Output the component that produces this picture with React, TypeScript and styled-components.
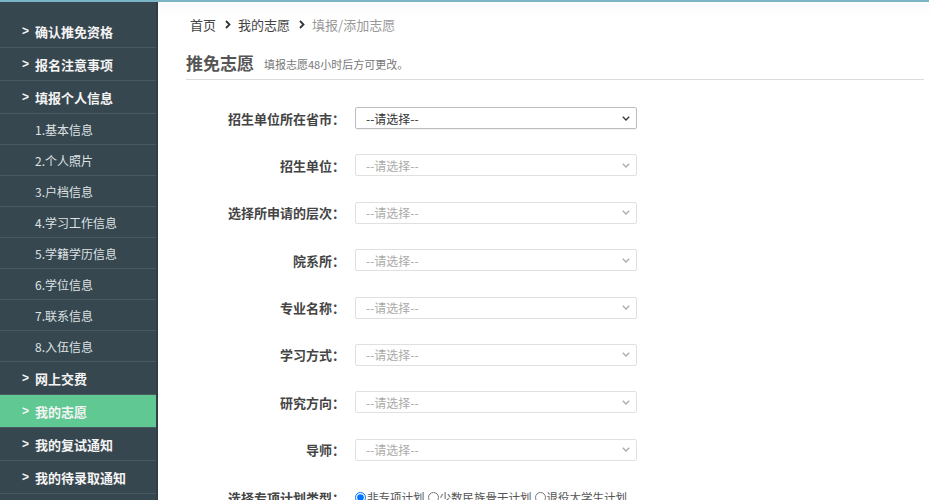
import React from "react";
import styled, { createGlobalStyle } from "styled-components";

const GlobalStyle = createGlobalStyle`
  html, body {
    margin: 0;
    padding: 0;
    background: #fff;
    overflow: hidden;
  }
  body {
    font-family: "Noto Sans CJK SC", "Noto Sans", sans-serif;
  }
  * {
    box-sizing: border-box;
  }
`;

type NavEntry = { label: string; level: "main" | "sub"; active?: boolean };

const navItems: NavEntry[] = [
  { label: "确认推免资格", level: "main" },
  { label: "报名注意事项", level: "main" },
  { label: "填报个人信息", level: "main" },
  { label: "1.基本信息", level: "sub" },
  { label: "2.个人照片", level: "sub" },
  { label: "3.户档信息", level: "sub" },
  { label: "4.学习工作信息", level: "sub" },
  { label: "5.学籍学历信息", level: "sub" },
  { label: "6.学位信息", level: "sub" },
  { label: "7.联系信息", level: "sub" },
  { label: "8.入伍信息", level: "sub" },
  { label: "网上交费", level: "main" },
  { label: "我的志愿", level: "main", active: true },
  { label: "我的复试通知", level: "main" },
  { label: "我的待录取通知", level: "main" },
];

const formRows = [
  { label: "招生单位所在省市：", enabled: true },
  { label: "招生单位：", enabled: false },
  { label: "选择所申请的层次：", enabled: false },
  { label: "院系所：", enabled: false },
  { label: "专业名称：", enabled: false },
  { label: "学习方式：", enabled: false },
  { label: "研究方向：", enabled: false },
  { label: "导师：", enabled: false },
];

const plans = ["非专项计划", "少数民族骨干计划", "退役大学生计划"];

const Chevron = ({ color }: { color: string }) => (
  <svg width="8" height="5" viewBox="0 0 8 5" fill="none">
    <path d="M0.8 0.8 L4 4 L7.2 0.8" stroke={color} strokeWidth="1.3" />
  </svg>
);

const CrumbArrow = () => (
  <svg width="6" height="9" viewBox="0 0 6 9" fill="none">
    <path d="M1 1 L4.5 4.5 L1 8" stroke="#333" strokeWidth="1.8" />
  </svg>
);

export default function App() {
  return (
    <>
      <GlobalStyle />
      <Page>
        <Sidebar>
          {navItems.map((item) => (
            <NavItem key={item.label} $level={item.level} $active={!!item.active}>
              {item.level === "main" && <NavMark>&gt;</NavMark>}
              {item.label}
            </NavItem>
          ))}
        </Sidebar>
        <Content>
          <Breadcrumb>
            <Crumb>首页</Crumb>
            <CrumbArrow />
            <Crumb>我的志愿</Crumb>
            <CrumbArrow />
            <Crumb $current>填报/添加志愿</Crumb>
          </Breadcrumb>
          <TitleRow>
            <Title>推免志愿</Title>
            <SubTitle>填报志愿48小时后方可更改。</SubTitle>
          </TitleRow>
          <Form>
            {formRows.map((row) => (
              <FormRow key={row.label}>
                <FieldLabel>{row.label}</FieldLabel>
                <SelectBox $enabled={row.enabled}>
                  <SelectText $enabled={row.enabled}>--请选择--</SelectText>
                  <Chevron color={row.enabled ? "#333" : "#aaa"} />
                </SelectBox>
              </FormRow>
            ))}
            <FormRow>
              <FieldLabel>选择专项计划类型：</FieldLabel>
              <RadioGroup>
                {plans.map((p, i) => (
                  <RadioLabel key={p}>
                    <Radio type="radio" name="plan" defaultChecked={i === 0} />
                    {p}
                  </RadioLabel>
                ))}
              </RadioGroup>
            </FormRow>
          </Form>
        </Content>
      </Page>
    </>
  );
}

const Page = styled.div`
  display: flex;
  height: 500px;
  border-top: 2px solid #7ab6c6;
`;

const Sidebar = styled.nav`
  width: 158px;
  flex-shrink: 0;
  background: #37474f;
  border-right: 2px solid #303f46;
  padding-top: 13px;
  display: flex;
  flex-direction: column;
`;

const NavItem = styled.div<{ $level: "main" | "sub"; $active: boolean }>`
  display: flex;
  align-items: center;
  height: ${({ $level }) => ($level === "main" ? "33px" : "31px")};
  padding-left: ${({ $level }) => ($level === "main" ? "22px" : "35px")};
  border-bottom: 1px solid #4a5a62;
  background: ${({ $active }) => ($active ? "#60c893" : "transparent")};
  color: ${({ $level }) => ($level === "main" ? "#f4f4f4" : "#dde2e4")};
  font-size: ${({ $level }) => ($level === "main" ? "13px" : "12px")};
  font-weight: ${({ $level }) => ($level === "main" ? 700 : 400)};
  white-space: nowrap;
`;

const NavMark = styled.span`
  font-family: "Liberation Sans", sans-serif;
  font-weight: 700;
  font-size: 12px;
  width: 13px;
`;

const Content = styled.main`
  flex: 1;
  padding: 0 5px 0 28px;
  background: linear-gradient(#fcf8fc 0px, #ffffff 14px);
`;

const Breadcrumb = styled.div`
  display: flex;
  align-items: center;
  gap: 7px;
  height: 20px;
  margin-top: 12px;
  padding-left: 4px;
`;

const Crumb = styled.span<{ $current?: boolean }>`
  font-size: 13px;
  color: ${({ $current }) => ($current ? "#999" : "#444")};
  margin-right: ${({ $current }) => ($current ? "0" : "2px")};
`;

const TitleRow = styled.div`
  display: flex;
  align-items: center;
  gap: 10px;
  height: 29px;
  margin-top: 17px;
  padding-bottom: 5px;
  border-bottom: 1px solid #dcdcdc;
`;

const Title = styled.h2`
  margin: 0;
  font-size: 17px;
  font-weight: 700;
  color: #555;
`;

const SubTitle = styled.span`
  font-size: 11px;
  color: #777;
  padding-top: 2px;
`;

const Form = styled.div`
  display: flex;
  flex-direction: column;
  gap: 25.4px;
  padding-top: 27px;
`;

const FormRow = styled.div`
  display: flex;
  align-items: center;
  height: 22px;
`;

const FieldLabel = styled.label`
  width: 159px;
  margin-right: 10px;
  text-align: right;
  font-size: 13px;
  font-weight: 700;
  color: #444;
  white-space: nowrap;
`;

const SelectBox = styled.div<{ $enabled: boolean }>`
  display: flex;
  align-items: center;
  justify-content: space-between;
  width: 282px;
  height: 22px;
  padding: 0 6px 0 10px;
  background: #fff;
  border: 1px solid ${({ $enabled }) => ($enabled ? "#bdbdbd" : "#e0e0e0")};
  border-radius: 2px;
  box-shadow: ${({ $enabled }) => ($enabled ? "0 1px 1px rgba(0,0,0,0.06)" : "none")};
`;

const SelectText = styled.span<{ $enabled: boolean }>`
  font-size: 12px;
  color: ${({ $enabled }) => ($enabled ? "#333" : "#aaa")};
`;

const RadioGroup = styled.div`
  display: flex;
  align-items: center;
  gap: 3px;
`;

const RadioLabel = styled.label`
  display: flex;
  align-items: center;
  font-size: 11.5px;
  color: #555;
`;

const Radio = styled.input`
  margin: 0 1px 0 0;
  width: 11px;
  height: 11px;
`;
